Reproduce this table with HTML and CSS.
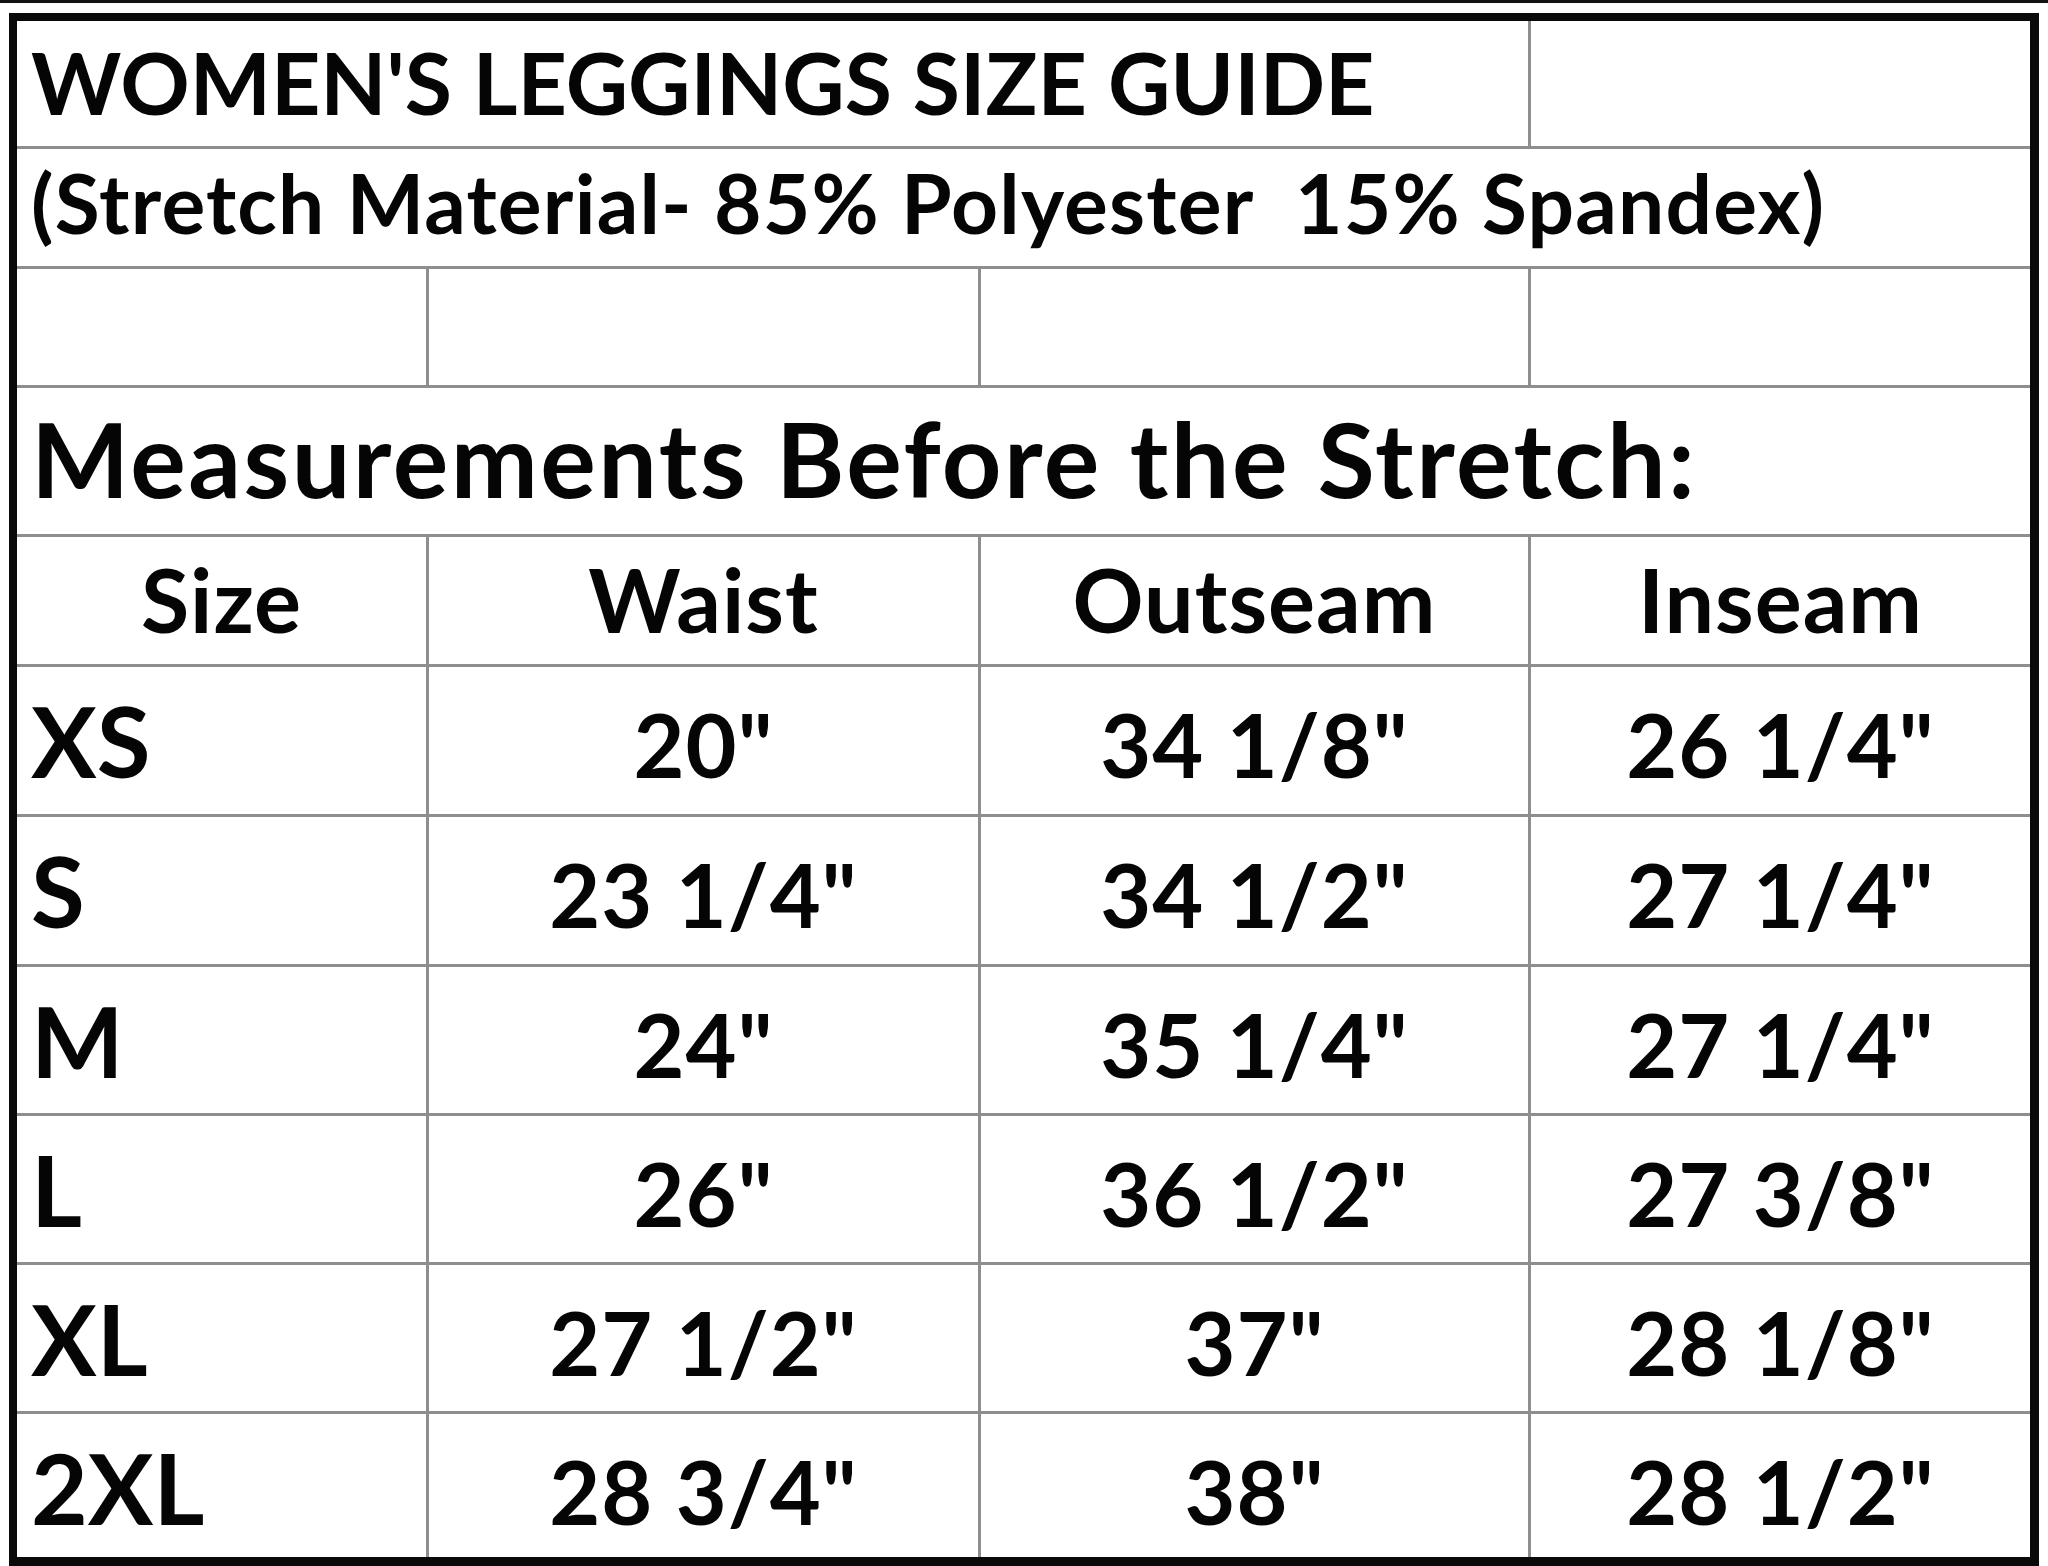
FILE: index.html
```html
<!DOCTYPE html>
<html lang="en">
<head>
<meta charset="utf-8">
<title>Women's Leggings Size Guide</title>
<link rel="stylesheet" href="styles.css">
</head>
<body>
<div class="topline"></div>
<div class="chart">
  <div class="cell span3 title">WOMEN'S LEGGINGS SIZE GUIDE</div>
  <div class="cell"></div>
  <div class="cell span4 material">(Stretch Material- 85% Polyester  15% Spandex)</div>
  <div class="cell"></div>
  <div class="cell"></div>
  <div class="cell"></div>
  <div class="cell"></div>
  <div class="cell span4 measure">Measurements Before the Stretch:</div>

  <div class="cell head">Size</div>
  <div class="cell head">Waist</div>
  <div class="cell head">Outseam</div>
  <div class="cell head">Inseam</div>

  <div class="cell size">XS</div>
  <div class="cell val">20"</div>
  <div class="cell val">34 1/8"</div>
  <div class="cell val">26 1/4"</div>

  <div class="cell size">S</div>
  <div class="cell val">23 1/4"</div>
  <div class="cell val">34 1/2"</div>
  <div class="cell val">27 1/4"</div>

  <div class="cell size">M</div>
  <div class="cell val">24"</div>
  <div class="cell val">35 1/4"</div>
  <div class="cell val">27 1/4"</div>

  <div class="cell size">L</div>
  <div class="cell val">26"</div>
  <div class="cell val">36 1/2"</div>
  <div class="cell val">27 3/8"</div>

  <div class="cell size">XL</div>
  <div class="cell val">27 1/2"</div>
  <div class="cell val">37"</div>
  <div class="cell val">28 1/8"</div>

  <div class="cell size">2XL</div>
  <div class="cell val">28 3/4"</div>
  <div class="cell val">38"</div>
  <div class="cell val">28 1/2"</div>
</div>
</body>
</html>
```
FILE: styles.css
```css
html, body {
  margin: 0;
  padding: 0;
  background: #fff;
}

body {
  width: 2048px;
  height: 1566px;
  overflow: hidden;
  font-family: "Lato", "Open Sans", sans-serif;
  font-weight: 700;
  color: #050505;
}

.topline {
  height: 3px;
  background: #111;
}

.chart {
  margin: 10px 0 0 9px;
  width: 2013px;
  border-style: solid;
  border-color: #0a0a0a;
  border-width: 8px 9px 9px 8px;
  display: grid;
  grid-template-columns: 409px 549px 547px 499px;
  grid-template-rows: 125px 117px 116px 146px 127px 147px 147px 146px 146px 146px 143px;
  gap: 3px;
  background: #8e8e8e;
}

.cell {
  background: #fff;
  display: flex;
  align-items: flex-start;
  line-height: 1;
  white-space: pre;
}

.span3 { grid-column: span 3; }
.span4 { grid-column: span 4; }

.title {
  font-size: 86px;
  padding: 18px 0 0 14px;
}

.material {
  font-size: 82px;
  letter-spacing: 1.2px;
  padding: 12px 0 0 14px;
}

.measure {
  font-size: 104px;
  letter-spacing: 2.5px;
  padding: 18px 0 0 14px;
}

.head {
  font-size: 88px;
  letter-spacing: 1px;
  justify-content: center;
  padding-top: 18px;
}

.size {
  font-size: 98px;
  padding: 24px 0 0 14px;
}

.val {
  font-size: 88px;
  letter-spacing: 1px;
  justify-content: center;
  padding-top: 33px;
}
```
